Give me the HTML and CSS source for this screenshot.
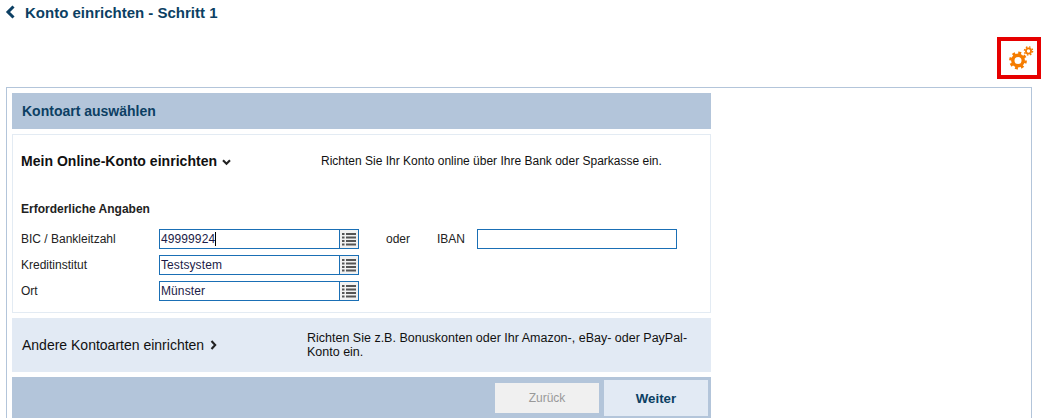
FILE: index.html
```html
<!DOCTYPE html>
<html lang="de">
<head>
<meta charset="utf-8">
<title>Konto einrichten</title>
<link rel="stylesheet" href="styles.css">
</head>
<body>
<header class="title">
  <svg class="back" width="11" height="14" viewBox="0 0 11 14"><path d="M8.5 1.5 L3 7 L8.5 12.5" fill="none" stroke="#0c3f63" stroke-width="3"/></svg>
  <h1>Konto einrichten - Schritt 1</h1>
</header>
<div class="tools">
  <div class="gear-box">
    <svg class="gear" width="26" height="26" viewBox="0 0 26 26">
      <g fill="none" stroke="#f57c00">
        <circle cx="10" cy="15.5" r="5.2" stroke-width="3.4"/>
        <circle cx="10" cy="15.5" r="7.6" stroke-width="2.6" stroke-dasharray="2.9 3.07"/>
        <circle cx="20.5" cy="6" r="2.6" stroke-width="1.8"/>
        <circle cx="20.5" cy="6" r="4.1" stroke-width="1.4" stroke-dasharray="1.6 1.62"/>
      </g>
    </svg>
  </div>
</div>
<main class="frame">
  <div class="column">
    <h2 class="section-head">Kontoart auswählen</h2>
    <section class="panel">
      <div class="online-row">
        <div class="online-title">Mein Online-Konto einrichten
          <svg width="9" height="7" viewBox="0 0 9 7"><path d="M1 1.2 L4.5 4.8 L8 1.2" fill="none" stroke="#222" stroke-width="2.1"/></svg>
        </div>
        <p class="online-text">Richten Sie Ihr Konto online über Ihre Bank oder Sparkasse ein.</p>
      </div>
      <h3 class="required">Erforderliche Angaben</h3>
      <div class="fields">
        <div class="field">
          <label class="field-label">BIC / Bankleitzahl</label>
          <div class="combo">
            <span class="combo-value">49999924<i class="caret"></i></span>
            <span class="combo-btn"><svg width="18" height="16" viewBox="0 0 18 16"><use href="#list"/></svg></span>
          </div>
          <span class="oder">oder</span>
          <span class="iban-label">IBAN</span>
          <div class="iban"></div>
        </div>
        <div class="field">
          <label class="field-label">Kreditinstitut</label>
          <div class="combo">
            <span class="combo-value">Testsystem</span>
            <span class="combo-btn"><svg width="18" height="16" viewBox="0 0 18 16"><use href="#list"/></svg></span>
          </div>
        </div>
        <div class="field">
          <label class="field-label">Ort</label>
          <div class="combo">
            <span class="combo-value">Münster</span>
            <span class="combo-btn"><svg width="18" height="16" viewBox="0 0 18 16"><use href="#list"/></svg></span>
          </div>
        </div>
      </div>
    </section>
    <section class="other">
      <div class="other-title">Andere Kontoarten einrichten
        <svg width="7" height="10" viewBox="0 0 7 10"><path d="M1.5 1 L5.2 5 L1.5 9" fill="none" stroke="#222" stroke-width="2.1"/></svg>
      </div>
      <p class="other-text">Richten Sie z.B. Bonuskonten oder Ihr Amazon-, eBay- oder PayPal-Konto ein.</p>
    </section>
    <footer class="actions">
      <div class="btn btn-off">Zurück</div>
      <div class="btn btn-next">Weiter</div>
    </footer>
  </div>
</main>
<svg class="defs" width="0" height="0">
  <symbol id="list" viewBox="0 0 18 16">
    <g fill="#555">
      <rect x="2" y="2" width="2.5" height="2"/><rect x="6" y="2" width="10" height="2"/>
      <rect x="2" y="5.5" width="2.5" height="2"/><rect x="6" y="5.5" width="10" height="2"/>
      <rect x="2" y="9" width="2.5" height="2"/><rect x="6" y="9" width="10" height="2"/>
      <rect x="2" y="12.5" width="2.5" height="2"/><rect x="6" y="12.5" width="10" height="2"/>
    </g>
  </symbol>
</svg>
</body>
</html>
```
FILE: styles.css
```css
html, body { margin: 0; padding: 0; height: 418px; overflow: hidden; background: #fff; }
body { font-family: "Liberation Sans", Arial, sans-serif; font-size: 12px; color: #111; }
h1, h2, h3, p { margin: 0; }
.defs { position: absolute; }
.title { display: flex; align-items: center; height: 24px; padding-left: 5px; gap: 9px; }
.title h1 { font-size: 15px; font-weight: 700; color: #0c3f63; }
.back { flex: none; }
.tools { display: flex; justify-content: flex-end; height: 63px; padding-right: 3px; }
.gear-box { width: 44px; height: 42px; margin-top: 13px; border: 4px solid #e60000; box-sizing: border-box; display: flex; align-items: center; justify-content: center; background: #fff; }
.gear { margin-left: 3px; }
.frame { margin-left: 6px; width: 1026px; height: 340px; box-sizing: border-box; border: 1px solid #b3c5da; padding: 5px; }
.column { width: 699px; display: flex; flex-direction: column; gap: 5px; }
.section-head { height: 36px; background: #b3c5da; color: #0c3f63; font-size: 14px; font-weight: 700; line-height: 37px; padding-left: 10px; }
.panel { height: 179px; box-sizing: border-box; border: 1px solid #e3ebf3; padding-left: 8px; }
.online-row { display: flex; align-items: center; height: 52px; }
.online-title { width: 300px; font-size: 14px; font-weight: 700; color: #111; letter-spacing: 0.03px; }
.online-title svg { margin-left: 1px; }
.online-text { font-size: 12px; }
.required { font-size: 12px; font-weight: 700; margin-top: 15px; line-height: 14px; color: #222; }
.fields { margin-top: 13px; display: flex; flex-direction: column; gap: 6px; }
.field { display: flex; align-items: center; height: 20px; }
.field-label { width: 138px; font-size: 12px; color: #222; }
.combo { width: 200px; height: 20px; box-sizing: border-box; border: 1px solid #1a6fb5; display: flex; }
.combo-value { flex: 1; padding-left: 1px; font-size: 12px; line-height: 18px; color: #1c1c48; letter-spacing: 0.1px; }
.caret { display: inline-block; width: 1px; height: 14px; background: #000; vertical-align: -3px; }
.combo-btn { width: 18px; border-left: 1px solid #1a6fb5; background: #f2f2f2; display: flex; align-items: center; justify-content: center; }
.oder { margin-left: 27px; width: 51px; font-size: 12px; color: #222; }
.iban-label { width: 40px; font-size: 12px; color: #222; }
.iban { width: 200px; height: 20px; box-sizing: border-box; border: 1px solid #1a6fb5; }
.other { height: 54px; background: #e2eaf4; display: flex; align-items: center; padding-left: 10px; }
.other-title { width: 285px; font-size: 14px; color: #111; }
.other-title svg { margin-left: 2px; }
.other-text { width: 385px; font-size: 12.5px; line-height: 14px; color: #111; }
.actions { height: 41px; background: #b3c5da; display: flex; justify-content: flex-end; align-items: flex-start; padding: 3px 3px 0 0; gap: 5px; }
.btn { height: 36px; display: flex; align-items: center; justify-content: center; font-size: 12px; }
.btn-off { width: 104px; height: 30px; margin-top: 3px; background: #f0f0f0; color: #999; }
.btn-next { width: 104px; height: 36px; background: #e2eaf4; color: #0c3f63; font-size: 13.3px; font-weight: 700; }
```
